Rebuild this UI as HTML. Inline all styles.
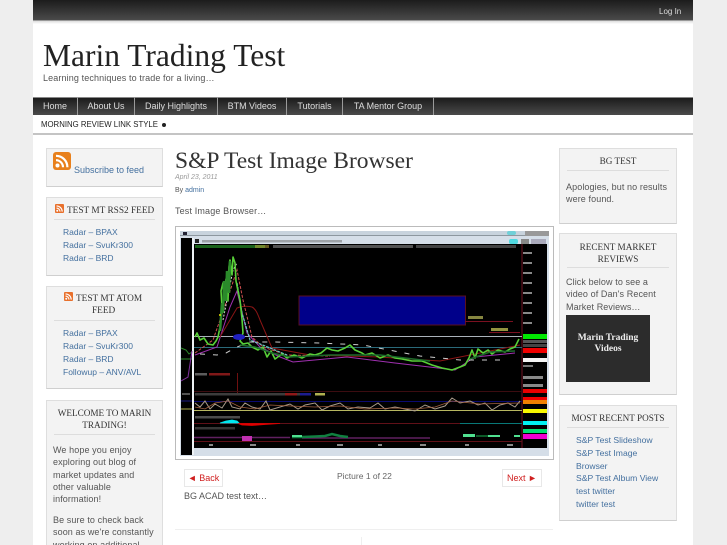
<!DOCTYPE html>
<html>
<head>
<meta charset="utf-8">
<style>
html,body{margin:0;padding:0;width:727px;height:545px;overflow:hidden}
body{background:#eeeeee;position:relative;font-family:"Liberation Sans",sans-serif;color:#555}
#w{position:absolute;left:0;top:0;width:727px;height:545px;overflow:hidden}
.a{position:absolute;white-space:nowrap}
.dark{background:linear-gradient(#1c1c1c,#4a4a4a)}
.box{position:absolute;background:#f3f3f3;border:1px solid #dedede;border-bottom-color:#cfcfcf;box-sizing:border-box}
.h{position:absolute;left:0;right:0;text-align:center;font:9.2px/12.3px "Liberation Serif",serif;color:#333}
.rule{position:absolute;height:1px;background:#ddd}
.t{position:absolute;white-space:nowrap;font-size:9px;letter-spacing:.1px;color:#555}
.l{color:#44709f}
.nav{position:absolute;top:97px;height:18px;font-size:9px;line-height:19px;color:#ddd;text-align:center;border-right:1px solid #9a9a9a;box-sizing:border-box}
</style>
</head>
<body>
<div id="w">
<div class="a" style="left:33px;top:0;width:660px;height:545px;background:#fff"></div>
<div class="a dark" style="left:33px;top:0;width:660px;height:21px;border-bottom:1px solid #999;box-sizing:border-box"></div>
<div class="a" style="left:33px;top:21px;width:660px;height:3px;background:linear-gradient(#ddd,#fff)"></div>
<div class="a" style="left:659px;top:6px;font-size:8px;line-height:11px;color:#ddd">Log In</div>

<div class="a" style="left:43px;top:36px;font:31.5px/40px 'Liberation Serif',serif;color:#222">Marin Trading Test</div>
<div class="a" style="left:43px;top:72px;font-size:9px;line-height:12px;letter-spacing:.12px;color:#555">Learning techniques to trade for a living…</div>

<div class="a dark" style="left:33px;top:97px;width:660px;height:18px;border-top:1px solid #888;box-sizing:border-box"></div>
<div class="nav" style="left:33px;width:45px">Home</div>
<div class="nav" style="left:78px;width:57px">About Us</div>
<div class="nav" style="left:135px;width:83px">Daily Highlights</div>
<div class="nav" style="left:218px;width:69px">BTM Videos</div>
<div class="nav" style="left:287px;width:56px">Tutorials</div>
<div class="nav" style="left:343px;width:91px">TA Mentor Group</div>

<div class="a" style="left:41px;top:119px;font-size:7.8px;line-height:12px;color:#222">MORNING REVIEW LINK STYLE</div>
<div class="a" style="left:162px;top:123px;width:4px;height:4px;border-radius:50%;background:#222"></div>
<div class="a" style="left:33px;top:133px;width:660px;height:2px;background:#c4c4c4"></div>

<!-- left sidebar -->
<div class="box" style="left:46px;top:148px;width:117px;height:39px"></div>
<svg class="a" style="left:53px;top:152px" width="18" height="18" viewBox="0 0 18 18"><rect width="18" height="18" rx="3" fill="#e8801c"/><circle cx="4.5" cy="13.5" r="2" fill="#fff"/><path d="M3 8.200a7 7 0 0 1 7 7M3 3.800a11.400 11.400 0 0 1 11.400 11.400" fill="none" stroke="#fff" stroke-width="2.200"/></svg>
<div class="t l" style="left:74px;top:164px;line-height:12px;letter-spacing:0">Subscribe to feed</div>

<div class="box" style="left:46px;top:197px;width:117px;height:79px"><div class="rule" style="left:7px;right:7px;top:21px"></div></div>
<svg class="a" style="left:55px;top:204px" width="9" height="9" viewBox="0 0 18 18"><rect width="18" height="18" rx="2" fill="#e8702c"/><circle cx="4.500" cy="13.500" r="2" fill="#fff"/><path d="M3 8.200a7 7 0 0 1 7 7M3 3.800a11.400 11.400 0 0 1 11.400 11.400" fill="none" stroke="#fff" stroke-width="2.200"/></svg>
<div class="a" style="left:67px;top:205px;font:9.3px/12px 'Liberation Serif',serif;color:#333">TEST MT RSS2 FEED</div>
<div class="t l" style="left:63px;top:226px;line-height:13px;font-size:8.500px;letter-spacing:0">Radar – BPAX<br>Radar – SvuKr300<br>Radar – BRD</div>

<div class="box" style="left:46px;top:286px;width:117px;height:103px"><div class="rule" style="left:7px;right:7px;top:33px"></div></div>
<svg class="a" style="left:64px;top:292px" width="9" height="9" viewBox="0 0 18 18"><rect width="18" height="18" rx="2" fill="#e8702c"/><circle cx="4.500" cy="13.500" r="2" fill="#fff"/><path d="M3 8.200a7 7 0 0 1 7 7M3 3.800a11.400 11.400 0 0 1 11.400 11.400" fill="none" stroke="#fff" stroke-width="2.200"/></svg>
<div class="a" style="left:76px;top:293px;font:9.300px/12px 'Liberation Serif',serif;color:#333">TEST MT ATOM</div>
<div class="a" style="left:92px;top:305px;font:9.300px/12px 'Liberation Serif',serif;color:#333">FEED</div>
<div class="t l" style="left:63px;top:327px;line-height:13px;font-size:8.500px;letter-spacing:0">Radar – BPAX<br>Radar – SvuKr300<br>Radar – BRD<br>Followup – ANV/AVL</div>

<div class="box" style="left:46px;top:400px;width:117px;height:160px"><div class="h" style="top:6px">WELCOME TO MARIN<br>TRADING!</div><div class="rule" style="left:7px;right:7px;top:33px"></div></div>
<div class="t" style="left:53px;top:444px;line-height:12.300px">We hope you enjoy<br>exploring out blog of<br>market updates and<br>other valuable<br>information!</div>
<div class="t" style="left:53px;top:514px;line-height:12.300px">Be sure to check back<br>soon as we're constantly<br>working on additional</div>

<!-- main -->
<div class="a" style="left:175px;top:147px;font:23.500px/28px 'Liberation Serif',serif;color:#333">S&amp;P Test Image Browser</div>
<div class="a" style="left:175px;top:173px;font:italic 7px/9px 'Liberation Sans',sans-serif;color:#999">April 23, 2011</div>
<div class="a" style="left:175px;top:186px;font-size:7px;line-height:10px;color:#555">By <span class="l">admin</span></div>
<div class="a" style="left:175px;top:205px;font-size:9px;line-height:12px;letter-spacing:.15px;color:#555">Test Image Browser…</div>

<div class="a" style="left:175px;top:226px;width:379px;height:234px;border:1px solid #bbb;box-sizing:border-box;background:#fff"></div>
<svg class="a" style="left:180px;top:231px" width="369" height="225" viewBox="0 0 369 225">
<rect width="369" height="225" fill="#d5dee8"/>
<rect x="0" y="0" width="369" height="4" fill="#c8d3dd"/>
<rect x="0" y="4" width="369" height="1" fill="#8d979f"/>
<rect x="1" y="7" width="11" height="217" fill="#000"/>
<rect x="12" y="7" width="2" height="217" fill="#eef2f5"/>
<rect x="14" y="13" width="353" height="204" fill="#000"/>
<rect x="3" y="1" width="4" height="3" fill="#223"/>
<rect x="15" y="8" width="4" height="4" fill="#222"/>
<rect x="22" y="9" width="140" height="2.500" fill="#666" opacity=".5"/>
<rect x="329" y="8" width="9" height="5" rx="2" fill="#50d8e0"/>
<rect x="341" y="8" width="8" height="5" fill="#888"/>
<rect x="351" y="8" width="15" height="5" fill="#aab"/>
<rect x="327" y="0" width="9" height="4" rx="2" fill="#70d0d8"/>
<rect x="345" y="0" width="24" height="5" fill="#999"/>
<rect x="15" y="14" width="70" height="3" fill="#30b030" opacity=".55"/>
<rect x="75" y="14" width="14" height="3" fill="#c8b040" opacity=".5"/>
<rect x="93" y="14" width="140" height="3" fill="#ccc" opacity=".4"/>
<rect x="236" y="14" width="100" height="3" fill="#bbb" opacity=".35"/>
<!-- blue box -->
<rect x="119" y="65" width="166.500" height="29" fill="#00008a" stroke="#5a1020"/>
<path d="M285 90.500H333" stroke="#7a1020"/>
<path d="M309 101.500H340" stroke="#7a1020"/>
<rect x="288" y="85" width="15" height="3" fill="#a8a850" opacity=".8"/>
<rect x="311" y="97" width="17" height="3" fill="#b8b850" opacity=".8"/>
<!-- right axis -->
<path d="M342 13V217" stroke="#701020"/>
<g fill="#888"><rect x="343" y="21" width="9" height="2"/><rect x="343" y="31" width="9" height="2"/><rect x="343" y="41" width="9" height="2"/><rect x="343" y="51" width="9" height="2"/><rect x="343" y="61" width="9" height="2"/><rect x="343" y="71" width="9" height="2"/><rect x="343" y="81" width="9" height="2"/><rect x="343" y="91" width="9" height="2"/><rect x="343" y="145" width="20" height="3"/><rect x="343" y="153" width="20" height="3"/></g>
<rect x="343" y="103" width="24" height="5" fill="#00e800"/>
<rect x="343" y="109" width="24" height="3" fill="#555"/>
<rect x="343" y="113" width="24" height="3" fill="#444"/>
<rect x="343" y="117" width="24" height="5" fill="#f00000"/>
<rect x="343" y="127" width="24" height="4" fill="#f4f4f4"/>
<rect x="343" y="134" width="10" height="2" fill="#777"/>
<rect x="343" y="158" width="24" height="4" fill="#e80000"/>
<rect x="343" y="166" width="24" height="3" fill="#f00000"/>
<rect x="343" y="169" width="24" height="4" fill="#f08000"/>
<rect x="343" y="178" width="24" height="4" fill="#f8f800"/>
<rect x="343" y="190" width="24" height="4" fill="#00f0f0"/>
<rect x="343" y="198" width="24" height="4" fill="#00e070"/>
<rect x="343" y="203" width="24" height="5" fill="#f000d0"/>
<!-- horizontal lines -->
<path d="M14 105.500H342" stroke="#aab2ba"/>
<path d="M14 116.500H342" stroke="#2a6a7a"/>
<!-- moving averages -->
<path d="M15 124L37 116L50 76L57 60L67 102L80 116L100 126L113 131L167 126L215 132L275 139L295 126L335 122" fill="none" stroke="#a030b0" stroke-width="1"/>
<path d="M40 106L57 77C62 75 68 75 72 76C76 78 78 84 80 89L92 117L130 124L200 126L260 130L300 122L340 114" fill="none" stroke="#8a1515" stroke-width="1"/>
<path d="M15 122L33 109L47 69L57 39L63 69L72 106L83 116L107 124L150 125" fill="none" stroke="#d05050" stroke-width="1" stroke-dasharray="3 1.500"/>
<path d="M43 89L53 39L57 32" fill="none" stroke="#ddd" stroke-width="1" stroke-dasharray="2 1.500"/>
<path d="M57 52L62 82L70 109L90 117L107 124" fill="none" stroke="#70c8c8" stroke-width="1.200" stroke-dasharray="3 1"/>
<path d="M20 123L37 124L46 122L57 116L70 111L93 111L140 112L183 114L240 125L280 129L320 129" fill="none" stroke="#ccc" stroke-width="1" stroke-dasharray="5 8"/>
<!-- price -->
<path d="M15 106L17 102L20 109L24 107L28 113L33 114L36 110L38 106L40 96L42 76L41 60L43 52L45 66L46 48L48 70L49 36L50 29L52 44L53 26L55 32L56 50L58 60L60 69L62 88L63 102L60 110L63 113L68 112L72 116L78 119L83 116L87 126L91 120L95 128L102 123L107 127L114 124L122 127L130 123L135 124L141 122L147 117L152 119L158 120L165 117L170 114L175 119L182 122L185 124L192 122L200 127L208 124L215 127L222 128L232 130L242 130L252 134L262 137L272 139L280 136L285 134L289 127L292 119L295 127L298 118L303 122L308 119L312 123L318 119L325 121L330 118L335 116L339 108" fill="none" stroke="#58d038" stroke-width="1.600" stroke-linejoin="round"/>
<path d="M43 82L44 50L46 70L47 40L49 62L50 30M40 100L42 72" fill="none" stroke="#2a8a2a" stroke-width="2.500"/>
<path d="M60 114L75 116L92 122L110 126L150 124L200 124L250 130M290 128L310 121L335 120" fill="none" stroke="#1c6a2a" stroke-width="1.500"/>
<ellipse cx="59" cy="106" rx="6" ry="3" fill="#2020c0"/>
<circle cx="40" cy="84" r="1" fill="#e8e000"/>
<!-- left panel -->
<path d="M1 117L6 119L9 123L12 121M1 128H12" stroke="#2a8a2a" fill="none"/>
<path d="M1 150L8 146L12 120" stroke="#8030a0" fill="none"/>
<path d="M1 178H12" stroke="#b0b050"/>
<path d="M1 170H12" stroke="#1a1a80"/>
<rect x="2" y="162" width="8" height="2" fill="#888" opacity=".6"/>
<!-- volume -->
<rect x="15" y="142" width="12" height="2.500" fill="#999" opacity=".6"/>
<rect x="29" y="142" width="21" height="2.500" fill="#801818"/>
<path d="M57.500 142V162" stroke="#701010"/>
<path d="M14 160.500H342" stroke="#3c0c10"/>
<!-- rsi labels -->
<rect x="15" y="162" width="110" height="2.500" fill="#777" opacity=".5"/>
<rect x="105" y="162" width="12" height="2.500" fill="#901818"/>
<rect x="120" y="162" width="11" height="2.500" fill="#1c1c90"/>
<rect x="135" y="162" width="10" height="2.500" fill="#b0b050"/>
<!-- rsi -->
<path d="M14 170.500H342" stroke="#0a0a70"/>
<path d="M14 179.500H342" stroke="#b8b860"/>
<path d="M15 172L20 176L25 170L30 178L35 173L42 177L48 168L52 176L60 178L65 172L72 176L80 178L86 170L90 179L100 176L110 173L118 178L125 174L135 172L142 179L150 175L160 172L168 178L178 176L190 177L198 172L205 178L215 176L225 178L235 180L245 174L255 178L265 175L272 167L280 172L290 170L298 174L305 172L312 179L320 174L328 172L335 176L340 170" fill="none" stroke="#a89a8a" stroke-width="1"/>
<path d="M15 176L25 178L35 172L48 170L60 176L75 178L90 174L110 175L135 176L160 175L185 178L215 177L235 178L255 176L272 170L300 173L340 172" fill="none" stroke="#a06040" stroke-width=".8"/>
<!-- macd -->
<rect x="15" y="185" width="45" height="2.500" fill="#888" opacity=".55"/>
<path d="M14 192.500H280" stroke="#601018"/>
<path d="M280 192.500H342" stroke="#087878"/>
<path d="M40 192L46 190L52 189L57 190L59 192Z" fill="#00e8f0" stroke="#00e8f0" stroke-width=".8"/>
<path d="M58 192.500H100L85 193.500L72 194.500L62 194Z" fill="#e00000" stroke="#e00000" stroke-width=".8"/>
<!-- bottom -->
<rect x="15" y="196" width="40" height="2.500" fill="#888" opacity=".4"/>
<path d="M14 206.500H110M122 207H250" stroke="#602060" stroke-width="1.500"/>
<rect x="62" y="205" width="10" height="5" fill="#c030b0"/>
<path d="M112 206H122L135 205.500L145 205L152 203L160 205L168 206" stroke="#108040" stroke-width="2.500" fill="none"/>
<path d="M112 205H122" stroke="#50e090" stroke-width="2"/>
<rect x="283" y="203" width="12" height="3" fill="#50e090"/>
<rect x="296" y="204" width="12" height="2" fill="#0c5a28"/>
<rect x="308" y="204" width="12" height="2" fill="#50e090"/>
<rect x="334" y="204" width="6" height="2" fill="#50e090"/>
<path d="M14 210.500H342" stroke="#601018"/>
<g fill="#888"><rect x="29" y="213" width="4" height="2"/><rect x="70" y="213" width="6" height="2"/><rect x="116" y="213" width="4" height="2"/><rect x="157" y="213" width="6" height="2"/><rect x="198" y="213" width="4" height="2"/><rect x="240" y="213" width="6" height="2"/><rect x="285" y="213" width="4" height="2"/><rect x="327" y="213" width="6" height="2"/></g>
</svg>

<div class="a" style="left:184px;top:469px;width:39px;height:18px;border:1px solid #e8e8e8;box-sizing:border-box;font-size:9px;line-height:17px;text-align:center;color:#d02020">◄ Back</div>
<div class="a" style="left:337px;top:470px;font-size:8.500px;line-height:12px;color:#666">Picture 1 of 22</div>
<div class="a" style="left:502px;top:469px;width:40px;height:18px;border:1px solid #e8e8e8;box-sizing:border-box;font-size:9px;line-height:17px;text-align:center;color:#d02020">Next ►</div>
<div class="a" style="left:184px;top:490px;font-size:9px;line-height:12px;color:#555">BG ACAD test text…</div>
<div class="a" style="left:175px;top:529px;width:378px;height:1px;background:#efefef"></div>
<div class="a" style="left:361px;top:537px;width:1px;height:8px;background:#efefef"></div>

<!-- right sidebar -->
<div class="box" style="left:559px;top:148px;width:118px;height:76px"><div class="h" style="top:6px">BG TEST</div><div class="rule" style="left:7px;right:7px;top:21px"></div></div>
<div class="t" style="left:566px;top:181px;line-height:12.300px">Apologies, but no results<br>were found.</div>

<div class="box" style="left:559px;top:233px;width:118px;height:162px"><div class="h" style="top:6.500px">RECENT MARKET<br>REVIEWS</div><div class="rule" style="left:7px;right:7px;top:33px"></div></div>
<div class="t" style="left:566px;top:276px;line-height:12.300px">Click below to see a<br>video of Dan's Recent<br>Market Reviews…</div>
<div class="a" style="left:566px;top:315px;width:84px;height:67px;background:#2c2c2c;text-align:center;font:bold 9.500px/10.500px 'Liberation Serif',serif;color:#eee;padding-top:18px;box-sizing:border-box;white-space:normal">Marin Trading<br>Videos</div>

<div class="box" style="left:559px;top:405px;width:118px;height:116px"><div class="h" style="top:6px">MOST RECENT POSTS</div><div class="rule" style="left:7px;right:7px;top:21px"></div></div>
<div class="t l" style="left:576px;top:434px;line-height:12.800px;font-size:8.600px;letter-spacing:0">S&amp;P Test Slideshow<br>S&amp;P Test Image<br>Browser<br>S&amp;P Test Album View<br>test twitter<br>twitter test</div>
</div>
</body>
</html>
